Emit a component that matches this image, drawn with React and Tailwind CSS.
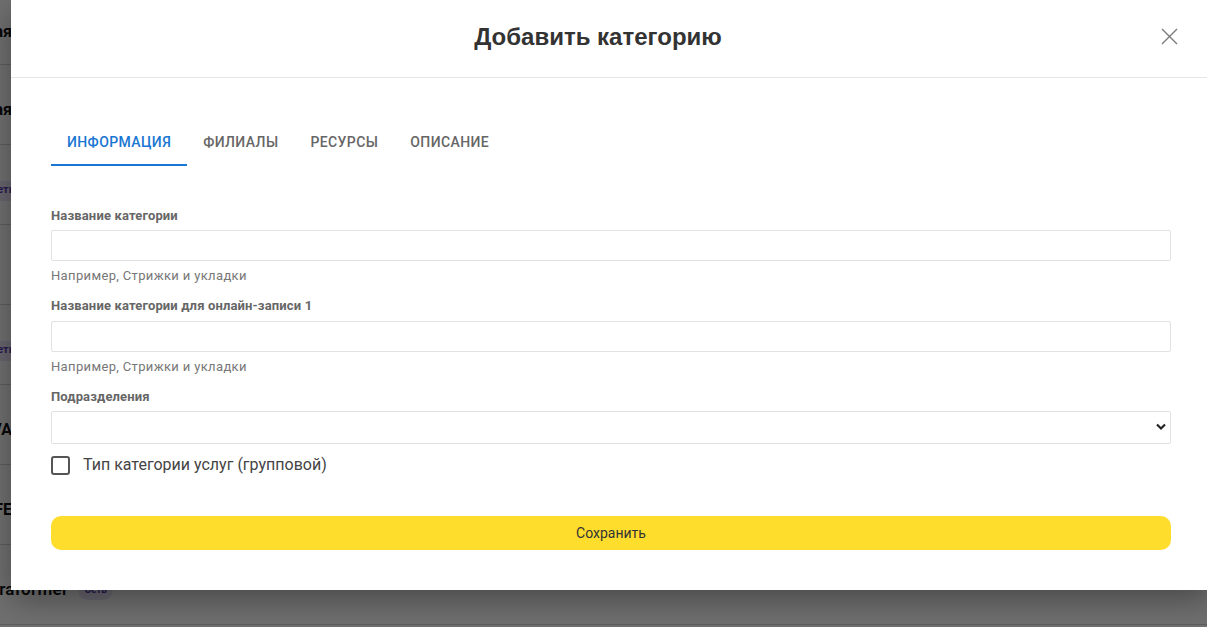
import { useState } from "react";

const rows = [
  { text: "Основная", badge: false, h: "h-[65px]", first: true },
  { text: "Мужская", badge: false },
  { text: "", badge: "Сеть" },
  { text: "", badge: false },
  { text: "", badge: "Сеть" },
  { text: "SPA NOVA", badge: false },
  { text: "RF LIFE", badge: false },
  { text: "Ultraformer", badge: "Сеть", last: true },
];

function BackgroundList() {
  return (
    <div className="flex flex-col w-full">
      {rows.map((r, i) => (
        <div
          key={i}
          className={
            (r.h || "h-[80px]") +
            " border-b border-[#d6d6d6] flex items-center shrink-0"
          }
        >
          {r.last ? (
            <div className="flex items-center gap-2 ml-[-23px] mt-[10px]">
              <span className="text-[17px] font-semibold text-[#111] tracking-[0.3px]">
                {r.text}
              </span>
              <span className="ml-[2px] px-[6px] h-[20px] rounded-full bg-[#ece6fb] text-[#5b3db5] text-[10px] font-bold flex items-center">
                {r.badge}
              </span>
            </div>
          ) : r.badge ? (
            <span className="ml-[-18px] mt-[12px] px-[8px] h-[20px] rounded bg-[#ece6fb] text-[#5b3db5] text-[11px] font-bold flex items-center">
              {r.badge}
            </span>
          ) : r.text ? (
            <span
              className={
                "ml-[-140px] w-[152px] text-right text-[16px] font-bold text-[#111] whitespace-nowrap " +
                (r.first ? "mt-0" : "mt-[10px]")
              }
            >
              {r.text}
            </span>
          ) : null}
        </div>
      ))}
    </div>
  );
}

const tabs = ["Информация", "Филиалы", "Ресурсы", "Описание"];

export default function App() {
  const [active, setActive] = useState(0);
  const [group, setGroup] = useState(false);

  return (
    <div className="relative w-[1207px] h-[627px] overflow-hidden bg-white font-['Roboto',sans-serif]">
      <BackgroundList />

      {/* overlay */}
      <div className="absolute inset-0 bg-black/[0.56]" />

      {/* modal */}
      <div className="absolute left-[11px] top-0 w-[1200px] h-[590px] bg-white shadow-[0_10px_30px_rgba(0,0,0,0.35)] flex flex-col">
        <div className="h-[78px] border-b border-[#e6e6e6] flex items-center justify-center relative shrink-0">
          <h2 className="pr-[26px] pb-[3px] text-[24px] font-bold text-[#333] font-['Liberation_Sans',Arial,sans-serif]">
            Добавить категорию
          </h2>
          <button className="absolute right-[33px] top-[27px] w-[18px] h-[18px] flex items-center justify-center text-[#7a7a7a]">
            <svg width="17" height="17" viewBox="0 0 17 17" fill="none">
              <path d="M1 1L16 16M16 1L1 16" stroke="currentColor" strokeWidth="1.4" />
            </svg>
          </button>
        </div>

        <div className="px-10 flex flex-col">
          <div className="flex mt-[40px] h-[48px]">
            {tabs.map((t, i) => (
              <button
                key={t}
                onClick={() => setActive(i)}
                className={
                  "px-4 pt-[2px] h-full uppercase text-[14px] font-medium tracking-[0.4px] border-b-2 " +
                  (i === active
                    ? "text-[#1976d2] border-[#1976d2]"
                    : "text-[#666] border-transparent")
                }
              >
                {t}
              </button>
            ))}
          </div>

          <label className="mt-[42px] text-[13px] leading-[16px] font-bold text-[#666] tracking-[0.15px]">
            Название категории
          </label>
          <input className="mt-[6px] h-[31px] border border-[#e2e2e2] rounded-[2px] px-3 text-[14px] outline-none" />
          <p className="mt-[6px] text-[13px] leading-[18px] text-[#777] tracking-[0.35px]">
            Например, Стрижки и укладки
          </p>

          <label className="mt-[13px] text-[13px] leading-[16px] font-bold text-[#666] tracking-[0.15px]">
            Название категории для онлайн-записи 1
          </label>
          <input className="mt-[7px] h-[31px] border border-[#e2e2e2] rounded-[2px] px-3 text-[14px] outline-none" />
          <p className="mt-[6px] text-[13px] leading-[18px] text-[#777] tracking-[0.35px]">
            Например, Стрижки и укладки
          </p>

          <label className="mt-[13px] text-[13px] leading-[16px] font-bold text-[#666] tracking-[0.15px]">
            Подразделения
          </label>
          <div className="mt-[6px] h-[33px] border border-[#e2e2e2] rounded-[2px] relative">
            <svg
              className="absolute right-[4px] top-[11px]"
              width="10"
              height="8"
              viewBox="0 0 10 8"
            >
              <path d="M1 1.5L5 5.5L9 1.5" stroke="#222" strokeWidth="2.2" fill="none" />
            </svg>
          </div>

          <label className="mt-[9px] flex items-center gap-[13px] cursor-pointer">
            <span
              onClick={() => setGroup(!group)}
              className={
                "w-[19px] h-[19px] rounded-[3px] border-2 border-[#555] " +
                (group ? "bg-[#555]" : "bg-white")
              }
            />
            <span className="text-[16px] text-[#444]">
              Тип категории услуг (групповой)
            </span>
          </label>

          <button className="mt-[39px] h-[34px] rounded-[10px] bg-[#ffdd2d] text-[14px] text-[#333]">
            Сохранить
          </button>
        </div>
      </div>
    </div>
  );
}
